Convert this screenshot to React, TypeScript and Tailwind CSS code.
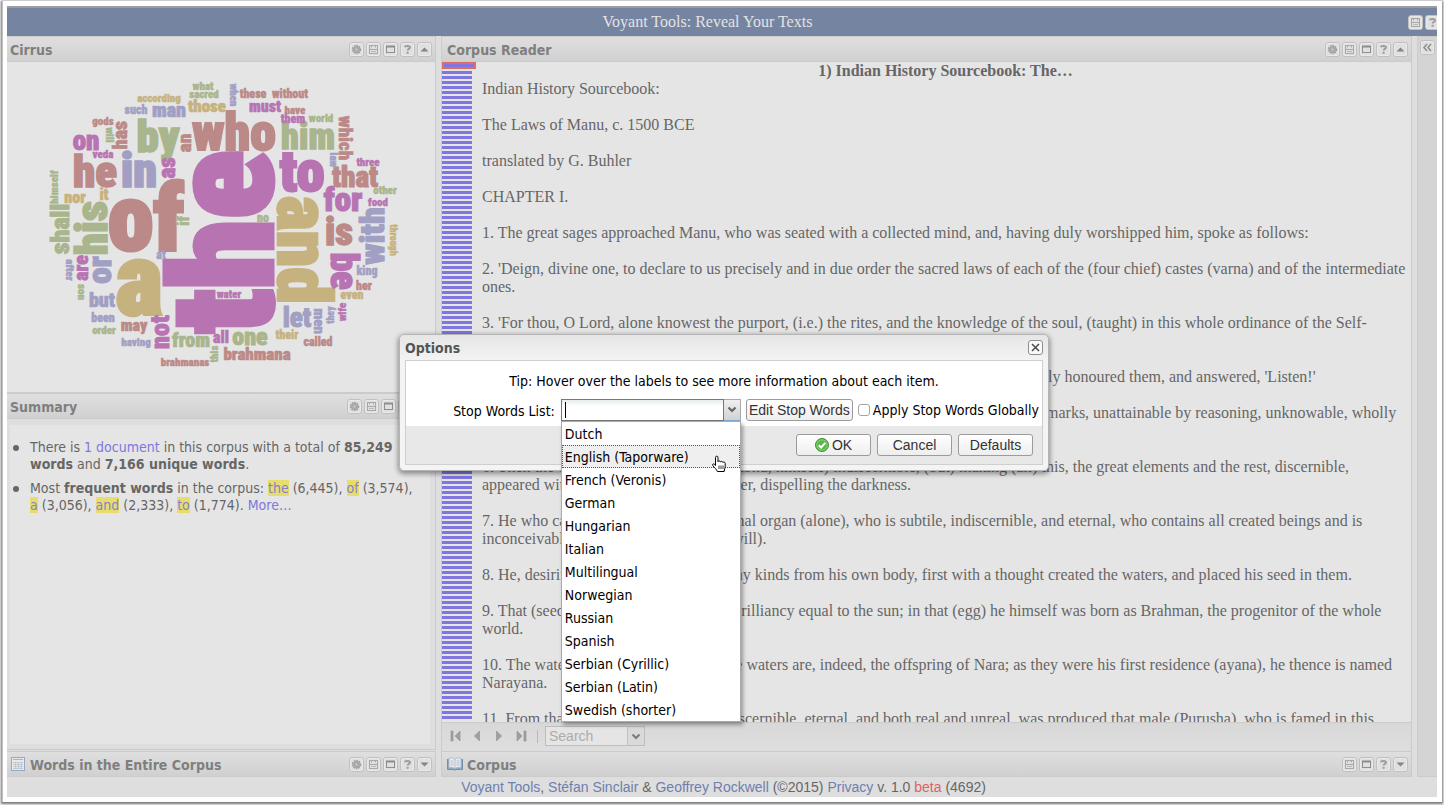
import React from "react";

type ToolName = "gear" | "save" | "window" | "help" | "up" | "down" | "collapse";

const TOOL_LABELS: Record<ToolName, string> = {
  gear: "Options",
  save: "Export",
  window: "Open in new window",
  help: "Help",
  up: "Collapse panel",
  down: "Expand panel",
  collapse: "Expand sidebar",
};

function ToolGlyph({ name }: { name: ToolName }) {
  switch (name) {
    case "gear":
      return (
        <g fill="none" stroke="#9c9c9c">
          <circle cx="7.5" cy="7.5" r="4" strokeWidth="1.4" strokeDasharray="1.6 1" />
          <circle cx="7.5" cy="7.5" r="2.4" strokeWidth="2.6" stroke="#a8a8a8" />
          <circle cx="7.5" cy="7.5" r="1" fill="#bdbdbd" stroke="none" />
        </g>
      );
    case "save":
      return (
        <g fill="none" stroke="#a8a8a8">
          <rect x="3.5" y="3.5" width="8" height="8" />
          <path d="M5.5 3.5v2M9.5 3.5v2M3.5 7.5h8" />
          <path d="M5 9.5h5" stroke="#b8b8b8" />
        </g>
      );
    case "window":
      return (
        <g fill="none" stroke="#8d8d8d">
          <rect x="3.5" y="4.5" width="8" height="6" />
          <path d="M3 4.5h9" strokeWidth="2" />
        </g>
      );
    case "help":
      return (
        <g fill="none" stroke="#9c9c9c" strokeWidth="2">
          <path d="M5 5.2c0-1.600 5-1.900 5 .3 0 1.500-2.400 1.200-2.400 3" />
          <path d="M6.600 10.800h2" />
        </g>
      );
    case "up":
      return <path d="M3.500 9.500 7.500 5.500 11.500 9.500z" fill="#858585" />;
    case "down":
      return <path d="M3.500 5.500 7.500 9.500 11.500 5.500z" fill="#858585" />;
    case "collapse":
      return <path d="M7 4 4 7.500 7 11M11 4 8 7.500 11 11" fill="none" stroke="#8d8d8d" strokeWidth="1.500" />;
  }
}

function Tool({ name }: { name: ToolName }) {
  return (
    <button type="button" aria-label={TOOL_LABELS[name]} className="block size-[15px] shrink-0">
      <svg viewBox="0 0 15 15" className="block size-[15px]">
        <rect x="0.5" y="0.5" width="14" height="14" rx="2.500" fill="#e0e0e0" stroke="#c0c0c0" />
        <rect x="1.500" y="1.500" width="12" height="12" rx="1.500" fill="none" stroke="#e9e9e9" />
        <ToolGlyph name={name} />
      </svg>
    </button>
  );
}

interface PanelHeaderProps {
  title: string;
  tools: ToolName[];
  icon?: React.ReactNode;
  padding?: string;
}

function PanelHeader({ title, tools, icon, padding = "px-[3px]" }: PanelHeaderProps) {
  return (
    <header
      className={`flex h-[26px] shrink-0 items-center border border-l-0 border-[#cbcbcb] bg-linear-to-b from-[#dfdfdf] to-[#d0d0d0] ${padding}`}
    >
      {icon}
      <h2 className="flex-1 pt-[2px] text-[14px] leading-5 font-bold text-[#7f7f7f]">{title}</h2>
      <div className="flex gap-[2px]">
        {tools.map((t) => (
          <Tool key={t} name={t} />
        ))}
      </div>
    </header>
  );
}

const GREEN = "#a9b58c";
const ROSE = "#bb8987";
const LILAC = "#a19fc3";
const PLUM = "#b873b2";
const SAND = "#c6b27f";

type Direction = "across" | "up" | "down";
/** text, colour, direction, baseline centre x, baseline centre y, length of the word */
type CloudWord = [string, string, Direction, number, number, number];

const CLOUD: CloudWord[] = [
  ["the", PLUM, "up", 271, 242, 175],
  ["of", ROSE, "across", 145, 250, 71],
  ["and", SAND, "down", 277, 250, 108],
  ["a", SAND, "across", 138, 315, 46],
  ["who", ROSE, "across", 233, 150, 85],
  ["to", PLUM, "across", 301, 191, 44],
  ["by", GREEN, "across", 157, 152, 43],
  ["he", ROSE, "across", 94, 187, 43],
  ["in", LILAC, "across", 138, 187, 35],
  ["him", GREEN, "across", 307, 149, 52],
  ["his", GREEN, "up", 106, 228, 53],
  ["shall", GREEN, "up", 68, 229, 49],
  ["with", LILAC, "up", 383, 236, 56],
  ["is", ROSE, "across", 338, 245, 27],
  ["be", PLUM, "down", 330, 271, 36],
  ["for", PLUM, "across", 342, 211, 36],
  ["that", ROSE, "across", 354, 187, 44],
  ["which", ROSE, "down", 338, 138, 44],
  ["on", PLUM, "across", 85, 150, 27],
  ["or", LILAC, "up", 110, 270, 27],
  ["as", PLUM, "up", 174, 168, 21],
  ["an", ROSE, "up", 190, 143, 18],
  ["has", ROSE, "up", 126, 135, 28],
  ["are", PLUM, "up", 87, 268, 25],
  ["not", PLUM, "up", 168, 332, 33],
  ["let", LILAC, "across", 296, 327, 26],
  ["men", LILAC, "down", 313, 321, 26],
  ["one", GREEN, "across", 249, 345, 35],
  ["all", PLUM, "across", 220, 343, 15],
  ["from", GREEN, "across", 190, 347, 37],
  ["but", LILAC, "across", 101, 307, 26],
  ["may", ROSE, "across", 133, 331, 27],
  ["man", LILAC, "across", 168, 117, 34],
  ["must", PLUM, "across", 264, 112, 32],
  ["those", SAND, "across", 206, 112, 38],
  ["nor", SAND, "across", 74, 203, 21],
  ["brahmana", ROSE, "across", 256, 360, 65],
  ["brahmanas", ROSE, "across", 184, 366, 50],
  ["water", PLUM, "across", 228, 298, 24],
  ["what", GREEN, "across", 202, 90, 21],
  ["sacred", GREEN, "across", 203, 98, 30],
  ["when", LILAC, "down", 229, 95, 22],
  ["according", SAND, "across", 158, 102, 45],
  ["such", LILAC, "across", 135, 114, 22],
  ["gods", ROSE, "across", 102, 125, 21],
  ["will", GREEN, "down", 105, 135, 15],
  ["veda", PLUM, "across", 102, 158, 20],
  ["himself", GREEN, "up", 57, 187, 31],
  ["it", SAND, "across", 103, 200, 8],
  ["these", ROSE, "across", 252, 98, 25],
  ["without", ROSE, "across", 289, 98, 34],
  ["have", ROSE, "across", 294, 114, 20],
  ["them", PLUM, "across", 292, 123, 24],
  ["world", GREEN, "across", 320, 122, 25],
  ["law", LILAC, "down", 329, 160, 14],
  ["three", PLUM, "across", 367, 166, 23],
  ["other", GREEN, "across", 384, 194, 23],
  ["food", PLUM, "across", 377, 206, 20],
  ["no", GREEN, "across", 262, 222, 12],
  ["through", SAND, "down", 389, 240, 32],
  ["king", LILAC, "across", 366, 275, 21],
  ["her", ROSE, "across", 363, 290, 15],
  ["even", SAND, "across", 351, 299, 23],
  ["they", LILAC, "up", 333, 315, 17],
  ["wife", PLUM, "up", 345, 312, 17],
  ["their", SAND, "across", 286, 339, 22],
  ["called", ROSE, "across", 317, 346, 27],
  ["after", LILAC, "down", 65, 270, 20],
  ["son", GREEN, "down", 77, 292, 16],
  ["at", LILAC, "across", 160, 259, 9],
  ["if", GREEN, "up", 188, 221, 8],
  ["been", LILAC, "across", 102, 322, 22],
  ["order", GREEN, "across", 103, 334, 23],
  ["having", LILAC, "across", 135, 346, 29],
  ["this", GREEN, "up", 217, 354, 16],
];

const GLYPH_WIDTHS: Record<string, number> = {
  c: 0.456, a: 0.456, e: 0.456, k: 0.456, s: 0.456, v: 0.456, y: 0.456,
  f: 0.273, t: 0.273, i: 0.228, l: 0.228, m: 0.729, r: 0.319, w: 0.638,
};

function fontSizeFor(text: string, length: number) {
  const em = [...text].reduce((sum, ch) => sum + (GLYPH_WIDTHS[ch] ?? 0.5), 0);
  return Math.round(length / em);
}

const ANGLES: Record<Direction, number> = { across: 0, up: -90, down: 90 };

function WordCloud() {
  return (
    <svg viewBox="6 62 428 330" className="block w-full" role="img" aria-label="Word cloud of the corpus">
      {CLOUD.map(([text, color, dir, x, y, length]) => {
        const size = fontSizeFor(text, length);
        return (
          <text
            key={text}
            transform={`translate(${x} ${y}) rotate(${ANGLES[dir]})`}
            textAnchor="middle"
            fontSize={size}
            fill={color}
            stroke={color}
            strokeWidth={size * 0.035}
            className="font-['Liberation_Sans_Narrow','Roboto_Condensed',sans-serif] font-black"
          >
            {text}
          </text>
        );
      })}
    </svg>
  );
}

const PARAGRAPHS = [
  "Indian History Sourcebook:",
  "The Laws of Manu, c. 1500 BCE",
  "translated by G. Buhler",
  "CHAPTER I.",
  "1. The great sages approached Manu, who was seated with a collected mind, and, having duly worshipped him, spoke as follows:",
  "2. 'Deign, divine one, to declare to us precisely and in due order the sacred laws of each of the (four chief) castes (varna) and of the intermediate ones.",
  "3. 'For thou, O Lord, alone knowest the purport, (i.e.) the rites, and the knowledge of the soul, (taught) in this whole ordinance of the Self-existent (Svayambhu), which is unknowable and unfathomable.'",
  "4. He, whose power is measureless, being thus asked by the high-minded great sages, duly honoured them, and answered, 'Listen!'",
  "5. This (universe) existed in the shape of Darkness, unperceived, destitute of distinctive marks, unattainable by reasoning, unknowable, wholly immersed, as it were, in deep sleep.",
  "6. Then the divine Self-existent (Svayambhu, himself) indiscernible, (but) making (all) this, the great elements and the rest, discernible, appeared with irresistible (creative) power, dispelling the darkness.",
  "7. He who can be perceived by the internal organ (alone), who is subtile, indiscernible, and eternal, who contains all created beings and is inconceivable, shone forth of his own (will).",
  "8. He, desiring to produce beings of many kinds from his own body, first with a thought created the waters, and placed his seed in them.",
  "9. That (seed) became a golden egg, in brilliancy equal to the sun; in that (egg) he himself was born as Brahman, the progenitor of the whole world.",
  "10. The waters are called narah, (for) the waters are, indeed, the offspring of Nara; as they were his first residence (ayana), he thence is named Narayana.",
  "11. From that (first) cause, which is indiscernible, eternal, and both real and unreal, was produced that male (Purusha), who is famed in this world (under the appellation of) Brahman.",
];

const STOP_LISTS = [
  "Dutch",
  "English (Taporware)",
  "French (Veronis)",
  "German",
  "Hungarian",
  "Italian",
  "Multilingual",
  "Norwegian",
  "Russian",
  "Spanish",
  "Serbian (Cyrillic)",
  "Serbian (Latin)",
  "Swedish (shorter)",
];

function Term({ children }: { children: string }) {
  return (
    <a href="#term" className="bg-[#e6dd6c] text-[#8a80c8]">
      {children}
    </a>
  );
}

function Summary() {
  return (
    <div className="flex-1 border-r border-[#cbcbcb] bg-[#dedede] pt-[6px] pr-[5px] pb-[5px] pl-[3px]">
      <ul className="flex h-full flex-col gap-[7px] bg-[#e5e5e5] pt-[14px] pr-[12px] pl-[20px] text-[14px] leading-[17px] text-[#666]">
        {[
          <>
            There is <a href="#docs" className="text-[#8076dd]">1 document</a> in this corpus with a total of{" "}
            <b>85,249 words</b> and <b>7,166 unique words</b>.
          </>,
          <>
            Most <b>frequent words</b> in the corpus: <Term>the</Term> (6,445), <Term>of</Term> (3,574),{" "}
            <Term>a</Term> (3,056), <Term>and</Term> (2,333), <Term>to</Term> (1,774).{" "}
            <a href="#more" className="text-[#8076dd]">More…</a>
          </>,
        ].map((item, i) => (
          <li key={i} className="relative">
            <span className="absolute top-[6px] -left-[17px] size-[6px] rounded-full bg-[#666]" />
            {item}
          </li>
        ))}
      </ul>
    </div>
  );
}

function Chevron() {
  return (
    <svg viewBox="0 0 10 7" className="h-[7px] w-[10px]">
      <path d="M1.500 1.500 5 5 8.500 1.500" fill="none" stroke="#666" strokeWidth="2.200" />
    </svg>
  );
}

function Pager({ label, d }: { label: string; d: string }) {
  return (
    <button type="button" aria-label={label} className="size-4">
      <svg viewBox="0 0 16 16" className="block size-4">
        <path d={d} fill="#a0a0a0" stroke="#8e8e8e" strokeWidth="0.600" />
      </svg>
    </button>
  );
}

function ReaderToolbar() {
  return (
    <div className="flex h-[29px] shrink-0 items-center border-t border-r border-[#cbcbcb] bg-linear-to-b from-[#d8d8d8] to-[#dedede] pb-[2px] pl-[6px]">
      <div className="flex gap-[6px]">
        <Pager label="First segment" d="M3 3h2v10h-2zM12 3v10l-5-5z" />
        <Pager label="Previous segment" d="M9.500 3v10l-5-5z" />
        <Pager label="Next segment" d="M4.500 3v10l5-5z" />
        <Pager label="Last segment" d="M3 3v10l5-5zM10 3h2v10h-2z" />
      </div>
      <span className="mx-[7px] h-[13px] w-px bg-[#b8b8b8]" />
      <div className="flex h-[20px] w-[100px] border border-[#bdbdbd]">
        <input
          aria-label="Search"
          placeholder="Search"
          className="min-w-0 flex-1 bg-[#e5e5e5] px-[3px] font-['Liberation_Sans',sans-serif] text-[14px] leading-4 outline-none placeholder:text-[#acacac]"
        />
        <button
          type="button"
          aria-label="Show searches"
          className="flex w-[17px] items-center justify-center border-l border-[#bdbdbd] bg-[#dadada] opacity-80"
        >
          <Chevron />
        </button>
      </div>
    </div>
  );
}

function DialogButton({ children }: { children: React.ReactNode }) {
  return (
    <button
      type="button"
      className="flex h-[22px] w-[75px] items-center justify-center gap-[3px] rounded-[3px] border border-[#9b9b9b] bg-linear-to-b from-white to-[#eeeeee] font-['Liberation_Sans',sans-serif] text-[14px] leading-4 text-[#333]"
    >
      {children}
    </button>
  );
}

function OptionsDialog() {
  return (
    <section
      role="dialog"
      aria-labelledby="options-title"
      className="w-[650px] rounded-[5px] border border-[#b5b5b5] bg-linear-to-b from-[#e6e6e6] via-[#f4f4f4] via-20% to-[#f4f4f4] px-[5px] pb-[5px] shadow-[0_2px_5px_1px_rgba(0,0,0,0.4)]"
    >
      <div className="flex h-[25px] items-center justify-between">
        <h2 id="options-title" className="pt-[2px] text-[14px] leading-5 font-bold text-[#555]">
          Options
        </h2>
        <button type="button" aria-label="Close" className="size-[15px]">
          <svg viewBox="0 0 15 15" className="block size-[15px]">
            <rect x="0.500" y="0.500" width="14" height="14" rx="2.500" fill="#fafafa" stroke="#8f8f8f" />
            <path d="M4 4l7 7M11 4l-7 7" stroke="#4a4a4a" strokeWidth="1.500" />
          </svg>
        </button>
      </div>
      <div className="border border-[#cfcfcf] text-[14px] leading-[18px] text-black">
        <div className="bg-white pt-[11px]">
          <p className="text-center">Tip: Hover over the labels to see more information about each item.</p>
          <div className="mt-[9px] flex h-[27px] items-start justify-end pr-[3px]">
            <label htmlFor="stop-list" className="mr-[6px] pt-[3px]">
              Stop Words List:
            </label>
            <div className="relative mr-[5px] flex h-[22px] w-[180px]">
              <input
                id="stop-list"
                role="combobox"
                aria-expanded="true"
                aria-controls="stop-list-options"
                className="min-w-0 flex-1 border border-[#777] bg-linear-to-b from-[#e8ecec] to-white to-30% px-[3px] outline-none"
              />
              <span className="absolute top-[3px] left-[4px] h-[16px] w-px bg-black" />
              <button
                type="button"
                aria-label="Show lists"
                className="flex w-[17px] items-center justify-center border-t border-r border-b border-t-[#aaa] border-r-[#aaa] border-b-[#7eadd9] bg-linear-to-b from-[#efefef] to-[#d2d2d2]"
              >
                <Chevron />
              </button>
              <ul
                id="stop-list-options"
                role="listbox"
                aria-label="Stop Words List"
                className="absolute top-[22px] left-0 z-10 w-full border border-[#aaa] bg-white shadow-[2px_3px_4px_rgba(0,0,0,0.35)]"
              >
                {STOP_LISTS.map((name) => {
                  const active = name === "English (Taporware)";
                  return (
                    <li
                      key={name}
                      role="option"
                      aria-selected={active}
                      className={
                        active
                          ? "h-[23px] border border-dotted border-[#555] bg-[#efefef] px-[2px] leading-[22px]"
                          : "h-[23px] border border-transparent px-[2px] leading-[22px]"
                      }
                    >
                      {name}
                    </li>
                  );
                })}
              </ul>
              <svg viewBox="0 0 16 18" className="absolute top-[56px] left-[150px] z-20 h-[18px] w-4">
                <path
                  d="M4.500 10.500V2.500c0-1.800 2.500-1.800 2.500 0v4.200c.3-1 2.300-1 2.500.3.500-1 2.200-.8 2.400.5.600-.8 2.300-.5 2.300 1v3.200c0 1.600-1 2.400-1 4.800H6.300c-.4-2-2.800-3.500-4.500-6-.8-1.400.8-2.200 1.700-1.200z"
                  fill="white"
                  stroke="black"
                  strokeWidth="1"
                />
                <path d="M8 10.500v3.500M10 10.500v3.500M12 10.500v3.500" stroke="black" strokeWidth="0.800" />
              </svg>
            </div>
            <button
              type="button"
              className="h-[22px] w-[107px] shrink-0 rounded-[3px] border border-[#9b9b9b] bg-linear-to-b from-white to-[#eeeeee] text-center font-['Liberation_Sans',sans-serif] text-[14px] leading-4 whitespace-nowrap text-[#333]"
            >
              Edit Stop Words
            </button>
            <label className="ml-[5px] flex items-center pt-[2px] whitespace-nowrap">
              <input
                type="checkbox"
                className="mr-[3px] size-[12px] appearance-none rounded-[3px] border border-[#a5a5a5] bg-white"
              />
              Apply Stop Words Globally
            </label>
          </div>
        </div>
        <div className="flex justify-end gap-[6px] bg-[#e8e8e8] pt-[8px] pr-[9px] pb-[8px]">
          <DialogButton>
            <svg viewBox="0 0 14 14" className="size-[14px]">
              <circle cx="7" cy="7" r="6.500" fill="#58b947" stroke="#3d9232" />
              <circle cx="7" cy="7" r="5.200" fill="none" stroke="#9ad68c" strokeWidth="0.800" />
              <path d="M3.800 7.200l2.300 2.300 4.200-4.700" fill="none" stroke="white" strokeWidth="2" />
            </svg>
            OK
          </DialogButton>
          <DialogButton>Cancel</DialogButton>
          <DialogButton>Defaults</DialogButton>
        </div>
      </div>
    </section>
  );
}

function TableIcon() {
  return (
    <svg viewBox="0 0 14 14" className="mr-[5px] ml-px size-[14px]">
      <rect x="0.500" y="0.500" width="13" height="13" fill="#e6e9ec" stroke="#94a9c6" />
      <path d="M2 2.500h10" stroke="#a3bf98" />
      <path d="M2 5.500h10M2 7.500h10M2 9.500h10M2 11.500h10M4.500 5v7M7.500 5v7M10.500 5v7" stroke="#b8bec6" strokeWidth="0.700" />
    </svg>
  );
}

function BookIcon() {
  return (
    <svg viewBox="0 0 16 14" className="mr-[4px] h-[14px] w-4">
      <path d="M0.500 2v10.500h6.500l1 .8 1-.8h6.500V2" fill="#8faac0" stroke="#6c8fae" />
      <path d="M2 1.500c2-.8 4.500-.6 6 .7 1.500-1.300 4-1.500 6-.7v9.300c-2-.6-4.500-.5-6 .8-1.500-1.300-4-1.400-6-.8z" fill="#e9ecee" stroke="#9db0c0" strokeWidth="0.700" />
      <path d="M8 2v9.500M3.500 4h3M3.500 6h3M3.500 8h3M9.500 4h3M9.500 6h3M9.500 8h3" stroke="#a7b2bb" strokeWidth="0.800" />
    </svg>
  );
}

export default function App() {
  return (
    <div className="h-screen bg-[#f4f4f4] pt-px pr-[2px] pb-[3px] pl-[2px] font-['Tahoma','DejaVu_Sans_Condensed','DejaVu_Sans',sans-serif]">
      <div className="relative flex h-full flex-col border-l border-[#c0c0c0] bg-white pt-[5px] pr-[5px] pb-[5px] pl-[4px] shadow-[0_1px_2px_1px_rgba(0,0,0,0.5)]">
        <header className="flex h-[30px] shrink-0 items-center overflow-hidden border-t-2 border-[#9d9d9d] bg-[#7584a1]">
          <h1 className="flex-1 text-center font-['Liberation_Serif',serif] text-[16px] leading-5 text-[#e3e3e3]">
            Voyant Tools: Reveal Your Texts
          </h1>
          <div className="flex w-[29px] gap-[2px]">
            <Tool name="save" />
            <Tool name="help" />
          </div>
        </header>

        <div className="flex min-h-0 flex-1 gap-[5px] bg-[#dedede]">
          <div className="flex w-[429px] shrink-0 flex-col">
            <PanelHeader title="Cirrus" tools={["gear", "save", "window", "help", "up"]} />
            <div className="h-[331px] shrink-0 border-r border-b border-[#cbcbcb] bg-[#e5e5e5]">
              <WordCloud />
            </div>
            <PanelHeader
              title="Summary"
              tools={["gear", "save", "window", "help", "up"]}
              padding="pr-[5px] pl-[3px]"
            />
            <Summary />
            <div className="h-[2px] shrink-0 border-t border-[#cbcbcb]" />
            <PanelHeader
              title="Words in the Entire Corpus"
              icon={<TableIcon />}
              tools={["gear", "save", "window", "help", "down"]}
            />
          </div>

          <div className="flex min-w-0 flex-1 flex-col border-l border-[#cbcbcb]">
            <PanelHeader
              title="Corpus Reader"
              tools={["gear", "save", "window", "help", "up"]}
              padding="pr-[3px] pl-[5px]"
            />
            <div className="flex min-h-0 flex-1 border-r border-[#cbcbcb] bg-[#e5e5e5]">
              <div className="relative mb-[3px] w-[30px] shrink-0 bg-[repeating-linear-gradient(to_bottom,#7f76e0_0_2px,#e5e5e5_2px_4px,#7f76e0_4px_5px)]">
                <div className="absolute top-0 left-0 h-[7px] w-[34px] border-2 border-[#df6c66] bg-[#7f76e0]" />
              </div>
              <article className="min-w-0 flex-1 overflow-hidden pr-[2px] pl-[10px] font-['Liberation_Serif',serif] text-[16px] leading-[18px] text-[#666]">
                <h3 className="text-center font-bold">1) Indian History Sourcebook: The…</h3>
                <div className="flex flex-col gap-[18px]">
                  {PARAGRAPHS.map((p) => (
                    <p key={p}>{p}</p>
                  ))}
                </div>
              </article>
            </div>
            <ReaderToolbar />
            <PanelHeader
              title="Corpus"
              icon={<BookIcon />}
              tools={["save", "window", "help", "down"]}
              padding="pr-[3px] pl-[5px]"
            />
          </div>

          <aside className="w-[20px] shrink-0 border border-r-0 border-[#cbcbcb] bg-[#d4d4d4] pt-[3px] pl-[2px]">
            <Tool name="collapse" />
          </aside>
        </div>

        <footer className="h-[20px] shrink-0 bg-[#dedede] pl-[3px] text-center font-['Liberation_Sans',sans-serif] text-[14px] leading-5 text-[#666]">
          <a href="#voyant" className="text-[#6d80ae]">Voyant Tools</a>,{" "}
          <a href="#sinclair" className="text-[#6d80ae]">Stéfan Sinclair</a> &amp;{" "}
          <a href="#rockwell" className="text-[#6d80ae]">Geoffrey Rockwell</a> (©2015){" "}
          <a href="#privacy" className="text-[#6d80ae]">Privacy</a> v. 1.0 <span className="text-[#dc6460]">beta</span>{" "}
          (4692)
        </footer>

        <div className="absolute inset-0 flex items-center justify-center pt-px pl-[3px]">
          <OptionsDialog />
        </div>
      </div>
    </div>
  );
}
